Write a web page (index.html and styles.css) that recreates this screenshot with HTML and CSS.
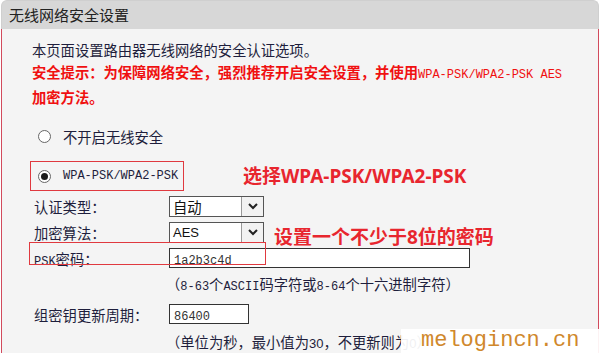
FILE: index.html
```html
<!DOCTYPE html>
<html lang="zh-CN">
<head>
<meta charset="UTF-8" />
<title>无线网络安全设置</title>
<link rel="stylesheet" href="styles.css">
</head>
<body>
<div class="page">
  <div class="head">无线网络安全设置</div>
  <div class="panel">
    <p class="intro">本页面设置路由器无线网络的安全认证选项。</p>
    <p class="warn">安全提示：为保障网络安全，强烈推荐开启安全设置，并使用<span class="mono">WPA-PSK/WPA2-PSK AES</span><br>加密方法。</p>

    <div class="opt opt-off"><span class="radio"></span>不开启无线安全</div>
    <div class="opt-row">
      <div class="opt opt-on"><span class="radio on"></span><span class="mono">WPA-PSK/WPA2-PSK</span></div>
      <span class="note">选择WPA-PSK/WPA2-PSK</span>
    </div>

    <div class="field">
      <label>认证类型：</label>
      <div class="select">
        <span class="value">自动</span>
        <span class="btn"><svg width="10" height="7" viewBox="0 0 10 7"><polyline points="1,1 5,5 9,1" fill="none" stroke="#222" stroke-width="2"/></svg></span>
      </div>
    </div>
    <div class="field">
      <label>加密算法：</label>
      <div class="select">
        <span class="value latin">AES</span>
        <span class="btn"><svg width="10" height="7" viewBox="0 0 10 7"><polyline points="1,1 5,5 9,1" fill="none" stroke="#222" stroke-width="2"/></svg></span>
      </div>
    </div>
    <div class="field">
      <label><span class="mono">PSK</span>密码：</label>
      <div class="input input-wide"><span class="mono">1a2b3c4d</span></div>
    </div>
    <p class="hint">（<span class="mono">8-63</span>个<span class="mono">ASCII</span>码字符或<span class="mono">8-64</span>个十六进制字符）</p>
    <div class="field field-gap">
      <label>组密钥更新周期：</label>
      <div class="input input-short"><span class="mono">86400</span></div>
    </div>
    <p class="hint hint-last">（单位为秒，最小值为<span class="latin">30</span>，不更新则为<span class="latin">0</span>）</p>
  </div>

  <!-- annotations drawn over the form -->
  <div class="note note-psk">设置一个不少于8位的密码</div>
  <div class="mark-psk"></div>
  <div class="watermark">melogincn.cn</div>
</div>
</body>
</html>
```

FILE: styles.css
```css
body {
  margin: 0;
  background: #fff;
  font-family: "Noto Sans CJK SC", sans-serif;
  font-size: 14px;
  color: #1e1e3c;
}
.page {
  position: relative;
  width: 598px;
  height: 353px;
  margin-left: 1px;
  overflow: hidden;
}
.head {
  height: 29px;
  box-sizing: border-box;
  padding-left: 7px;
  background: #d7d7d7;
  border: 1px solid #cfcfcf;
  border-bottom: none;
  border-radius: 6px 6px 0 0;
  font-size: 15px;
  line-height: 28px;
  color: #222;
}
.panel {
  height: 324px;
  box-sizing: border-box;
  padding: 10px 0 0 30px;
  background: #f4f4f4;
  border-left: 1px solid #d24a5c;
  border-right: 1px solid #d24a5c;
  font-size: 14.3px;
}
.panel p {
  margin: 0;
  line-height: 22px;
}
.mono {
  font-family: "Liberation Mono", monospace;
  font-size: 12px;
}
.latin {
  font-family: "Liberation Sans", sans-serif;
  font-size: 13px;
}
.warn {
  color: #f01010;
  font-weight: 700;
}
.warn .mono {
  font-weight: 400;
}
.opt {
  display: flex;
  align-items: center;
  box-sizing: border-box;
  width: 154px;
  margin-left: -2px;
  padding-left: 7px;
  border: 1px solid transparent;
}
.opt-off {
  height: 22px;
  margin-top: 17px;
}
.opt-row {
  display: flex;
  align-items: center;
  margin-top: 14px;
}
.opt-on {
  height: 30px;
  border-color: #e0393f;
}
.radio {
  width: 13px;
  height: 13px;
  box-sizing: border-box;
  margin-right: 12px;
  border: 1px solid #666;
  border-radius: 50%;
  background: #fff;
  display: flex;
  align-items: center;
  justify-content: center;
}
.radio.on::after {
  content: "";
  width: 7px;
  height: 7px;
  border-radius: 50%;
  background: #1a1a1a;
}
.note {
  margin-left: 59px;
  font-family: "Noto Sans", "Noto Sans CJK SC", sans-serif;
  font-size: 19px;
  font-weight: 700;
  line-height: 24px;
  color: #e8262e;
}
.field {
  display: flex;
  align-items: center;
  height: 22px;
  margin-top: 4px;
}
.field-gap {
  margin-top: 5px;
}
.field label {
  width: 135px;
  margin-left: 2px;
}
.select {
  display: flex;
  width: 95px;
  height: 21px;
  box-sizing: border-box;
  border: 1px solid #555;
  background: #fff;
}
.select .value {
  flex: 1;
  padding-left: 3px;
  line-height: 19px;
  color: #111;
}
.select .btn {
  width: 21px;
  display: flex;
  align-items: center;
  justify-content: center;
  border-left: 1px solid #999;
  background: #f2f2f2;
}
.input {
  height: 20px;
  box-sizing: border-box;
  padding-left: 4px;
  border: 1px solid #333;
  background: #fff;
  line-height: 18px;
  color: #333;
}
.input-wide {
  width: 301px;
}
.input-short {
  width: 80px;
}
.hint {
  margin-top: 4px !important;
  padding-left: 134px;
}
.hint-last {
  margin-top: 6px !important;
}
.note-psk {
  position: absolute;
  left: 273px;
  top: 225px;
  margin: 0;
}
.mark-psk {
  position: absolute;
  left: 28px;
  top: 242px;
  width: 237px;
  height: 23px;
  box-sizing: border-box;
  border: 1px solid #e0393f;
}
.watermark {
  position: absolute;
  left: 400px;
  top: 329px;
  right: 0;
  bottom: 0;
  padding-left: 20px;
  background: rgba(255, 255, 255, 0.93);
  font-family: "Liberation Mono", monospace;
  font-size: 22px;
  line-height: 24px;
  color: #d0882c;
}
```
